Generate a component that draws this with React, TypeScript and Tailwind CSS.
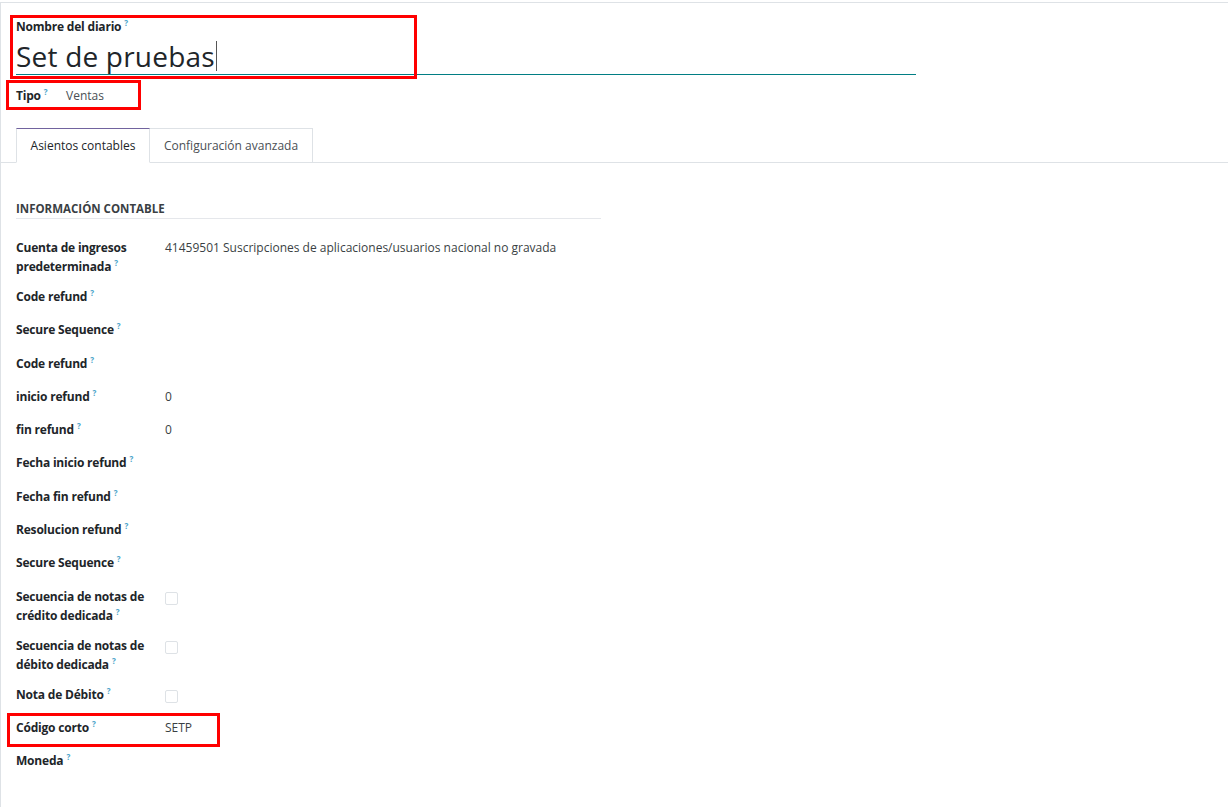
import React from "react";

const Help = () => (
  <span className="relative -top-[5px] ml-[3px] inline-block text-[8px] font-bold leading-none text-[#4aa3c9]">?</span>
);

type Row = { label: React.ReactNode; value?: React.ReactNode };

const Check = () => (
  <span className="mt-[5px] block w-[13px] h-[13px] rounded-[2px] border border-[#dee2e6] bg-white" />
);

const rows: Row[] = [
  {
    label: (
      <>
        Cuenta de ingresos
        <br />
        predeterminada
        <Help />
      </>
    ),
    value: "41459501 Suscripciones de aplicaciones/usuarios nacional no gravada",
  },
  { label: <>Code refund<Help /></> },
  { label: <>Secure Sequence<Help /></> },
  { label: <>Code refund<Help /></> },
  { label: <>inicio refund<Help /></>, value: "0" },
  { label: <>fin refund<Help /></>, value: "0" },
  { label: <>Fecha inicio refund<Help /></> },
  { label: <>Fecha fin refund<Help /></> },
  { label: <>Resolucion refund<Help /></> },
  { label: <>Secure Sequence<Help /></> },
  {
    label: (
      <>
        Secuencia de notas de
        <br />
        crédito dedicada
        <Help />
      </>
    ),
    value: <Check />,
  },
  {
    label: (
      <>
        Secuencia de notas de
        <br />
        débito dedicada
        <Help />
      </>
    ),
    value: <Check />,
  },
  { label: <>Nota de Débito<Help /></>, value: <Check /> },
  { label: <>Código corto<Help /></>, value: "SETP" },
  { label: <>Moneda<Help /></> },
];

export default function App() {
  return (
    <div
      className="relative min-h-[807px] bg-white text-[12px] text-[#212529]"
      style={{ fontFamily: '"Open Sans", "Noto Sans", sans-serif' }}
    >
      <div className="pt-[2px]">
        <div className="min-h-[805px] border-t border-l border-[#dee2e6]">
          {/* Header */}
          <div className="px-[15px] pt-[14px]">
            <div className="font-bold leading-[19px] tracking-[-0.2px]">
              Nombre del diario
              <Help />
            </div>
            <div className="w-[900px] h-[39px] border-b border-[#017e84] flex items-center">
              <span className="pt-[2px] text-[28px] leading-[38px] text-[#212529] tracking-[0.2px]">Set de pruebas</span>
              <span className="ml-[1px] mt-[2px] w-px h-[30px] bg-[#555]" />
            </div>
            <div className="pt-[11px] flex items-center leading-[19px]">
              <span className="w-[50px] font-bold tracking-[-0.2px]">
                Tipo
                <Help />
              </span>
              <span className="text-[#4a4f55]">Ventas</span>
            </div>
          </div>

          {/* Tabs */}
          <div className="mt-[23px] pl-[15px] flex border-b border-[#dee2e6]">
            <div className="-mb-px h-[35px] w-[134px] flex items-center justify-center border border-[#dee2e6] border-t-[#71639e] border-b-white bg-white text-[#212529]">
              Asientos contables
            </div>
            <div className="h-[34px] w-[163px] flex items-center justify-center border border-l-0 border-b-0 border-[#dee2e6] text-[#4a4f55]">
              Configuración avanzada
            </div>
          </div>

          {/* Section */}
          <div className="px-[15px]">
            <div className="mt-[36px] w-[585px] border-b border-[#e5e7eb] text-[11.5px] font-bold uppercase leading-[19px] text-[#3a3f44]">
              Información contable
            </div>
            <div className="mt-[19px] flex flex-col">
              {rows.map((r, i) => (
                <div key={i} className="flex min-h-[33.3px]">
                  <div className="w-[149px] shrink-0 pb-[11px] font-bold leading-[19px] tracking-[-0.2px]">{r.label}</div>
                  <div className="leading-[19px] text-[#3a3f44]">{r.value}</div>
                </div>
              ))}
            </div>
          </div>
        </div>
      </div>

      {/* Annotation boxes */}
      <div className="absolute left-[10px] top-[15px] w-[407px] h-[64px] border-[3px] border-[#ff0000]" />
      <div className="absolute left-[6px] top-[80px] w-[135px] h-[30px] border-[3px] border-[#ff0000]" />
      <div className="absolute left-[7px] top-[713px] w-[213px] h-[34px] border-[3px] border-[#ff0000]" />
    </div>
  );
}
